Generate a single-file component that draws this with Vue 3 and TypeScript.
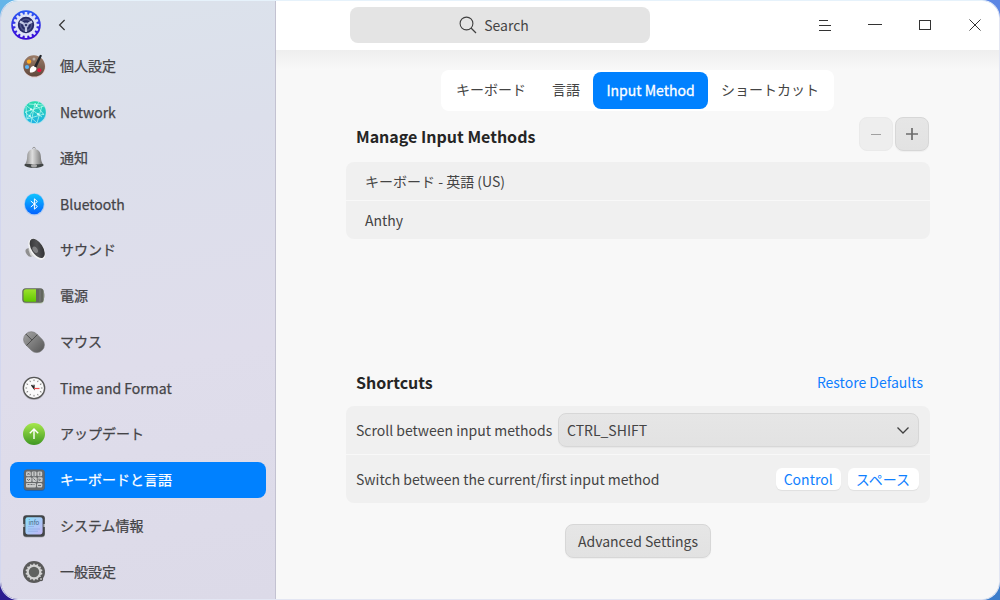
<script setup lang="ts">
import { ref } from 'vue'

interface NavItem {
  id: string
  label: string
}

const navItems: NavItem[] = [
  { id: 'personal', label: '個人設定' },
  { id: 'network', label: 'Network' },
  { id: 'notify', label: '通知' },
  { id: 'bluetooth', label: 'Bluetooth' },
  { id: 'sound', label: 'サウンド' },
  { id: 'power', label: '電源' },
  { id: 'mouse', label: 'マウス' },
  { id: 'time', label: 'Time and Format' },
  { id: 'update', label: 'アップデート' },
  { id: 'keyboard', label: 'キーボードと言語' },
  { id: 'info', label: 'システム情報' },
  { id: 'general', label: '一般設定' },
]
const tabs: string[] = ['キーボード', '言語', 'Input Method', 'ショートカット']
const inputMethods: string[] = ['キーボード - 英語 (US)', 'Anthy']
const shortcutKeys: string[] = ['Control', 'スペース']
const activeNav = ref('keyboard')
const activeTab = ref('Input Method')

const isLatin = (text: string): boolean => /^[\x20-\x7e]+$/.test(text)
const ring = (count: number): number[] => Array.from({ length: count }, (_, i) => (i * 360) / count)
</script>

<template>
  <div class="desktop">
    <div class="window">
      <aside class="sidebar">
        <div class="side-head">
          <svg class="logo" viewBox="0 0 30 30">
            <defs>
              <linearGradient id="lg" x1="0" y1="0" x2="0" y2="1">
                <stop offset="0" stop-color="#2a5cf5" />
                <stop offset="1" stop-color="#3d08d6" />
              </linearGradient>
            </defs>
            <circle cx="15" cy="15" r="14.8" fill="url(#lg)" />
            <g fill="#dfe3f7">
              <rect v-for="a in ring(16)" :key="a" x="13.7" y="2" width="2.6" height="4" rx=".6" :transform="`rotate(${a} 15 15)`" />
            </g>
            <circle cx="15" cy="15" r="9.5" fill="#262a66" stroke="#dfe3f7" stroke-width="2.6" />
            <circle cx="15" cy="15" r="5.6" fill="none" stroke="#4d5388" stroke-width="1.6" />
            <g stroke="#c3c8e4" stroke-width="2.2">
              <path v-for="a in [0, 120, 240]" :key="a" d="M15 16v6" :transform="`rotate(${a} 15 15)`" />
            </g>
            <circle cx="15" cy="15" r="2.6" fill="#a9afd3" />
            <circle cx="15" cy="15" r="1.1" fill="#20235c" />
          </svg>
          <svg class="back" viewBox="0 0 8 12"><path d="M6.6 1 1.6 6l5 5" fill="none" stroke="#333" stroke-width="1.2" /></svg>
        </div>
        <nav class="nav">
          <button v-for="item in navItems" :key="item.id" class="nav-item" :class="{ active: item.id === activeNav }" @click="activeNav = item.id">
            <svg class="icon" viewBox="0 0 24 24">
              <g v-if="item.id === 'personal'">
                <defs>
                  <linearGradient id="pal" x1="0" y1="0" x2="0" y2="1"><stop offset="0" stop-color="#9b7d69" /><stop offset="1" stop-color="#60483c" /></linearGradient>
                </defs>
                <ellipse cx="12.5" cy="13" rx="11" ry="10.6" fill="#e8a79a" opacity=".45" />
                <path d="M12 1.2C6 1 1.3 6 1.3 12S6 22.6 12.4 22.6c6 0 10.6-4.5 10.6-10.4C23 6 18 1.4 12 1.2z" fill="url(#pal)" />
                <circle cx="7" cy="7.6" r="2.2" fill="#ffab25" /><circle cx="12" cy="5" r="1.5" fill="#b8afa9" />
                <circle cx="5" cy="13" r="2.1" fill="#5bb5f8" /><circle cx="17.3" cy="16.2" r="2" fill="#e8123e" />
                <path d="M8 18.500c-.3-1.800-.4-4.300 1.500-5.800 1.700-1.300 4-.5 4.700.8.900 2.200-1.200 5.200-6.200 5z" fill="#fff" />
                <path d="m12 12.600 6-11.800 2 .8-5.500 12z" fill="#23262b" />
              </g>
              <g v-else-if="item.id === 'network'">
                <defs>
                  <linearGradient id="net" x1="0" y1="0" x2="0" y2="1"><stop offset="0" stop-color="#28dda9" /><stop offset="1" stop-color="#1eb1e6" /></linearGradient>
                </defs>
                <circle cx="12.900" cy="12.600" r="11.700" fill="#7fe6ee" opacity=".5" />
                <circle cx="12.900" cy="12.200" r="10.900" fill="url(#net)" />
                <g fill="none" stroke="#baf8ef" stroke-width=".75">
                  <path d="M4 5.500 20 17M3 12l19-6M5 19 17 2M9 23 13 3l9 12M3 12l12 11 5-17M4 7l1 12 17-5M7 4l14 1" />
                </g>
                <g fill="#e8fffb"><circle cx="9" cy="9.200" r="1" /><circle cx="16" cy="14" r="1" /><circle cx="14.500" cy="6" r=".9" /><circle cx="8" cy="16" r=".9" /></g>
              </g>
              <g v-else-if="item.id === 'notify'">
                <defs>
                  <linearGradient id="bell" x1="0" y1="0" x2="1" y2="0"><stop offset="0" stop-color="#858585" /><stop offset=".4" stop-color="#dedede" /><stop offset="1" stop-color="#6f6f6f" /></linearGradient>
                </defs>
                <circle cx="12" cy="2.600" r="1.300" fill="none" stroke="#999" stroke-width="1" />
                <ellipse cx="12" cy="19" rx="9.700" ry="2.900" fill="#424646" />
                <path d="M12 3c-4.500 0-6.600 2.900-6.800 7-.2 4-.6 5.500-1.700 7.500 4.500 1.200 12.500 1.200 17 0-1.100-2-1.500-3.500-1.700-7.500-.2-4.100-2.300-7-6.800-7z" fill="url(#bell)" />
                <ellipse cx="12" cy="19.700" rx="3" ry="1.800" fill="#a9a9a9" />
              </g>
              <g v-else-if="item.id === 'bluetooth'">
                <defs>
                  <linearGradient id="bt" x1="0" y1="0" x2="0" y2="1"><stop offset="0" stop-color="#0fc4ff" /><stop offset="1" stop-color="#0262ff" /></linearGradient>
                </defs>
                <ellipse cx="12.300" cy="12.400" rx="10.300" ry="11.200" fill="#65adff" opacity=".4" />
                <ellipse cx="12.300" cy="12" rx="9.500" ry="10.300" fill="url(#bt)" />
                <path d="M8.800 9l6.600 5.500-3 2.700V6.800l3 2.700L8.800 15" fill="none" stroke="#fff" stroke-width="1" />
              </g>
              <g v-else-if="item.id === 'sound'">
                <defs>
                  <linearGradient id="snd" x1="0" y1="0" x2="1" y2="1"><stop offset="0" stop-color="#2e2e30" /><stop offset=".5" stop-color="#505052" /><stop offset="1" stop-color="#252527" /></linearGradient>
                </defs>
                <ellipse cx="7.200" cy="14.500" rx="3" ry="4.500" transform="rotate(-35 7.200 14.500)" fill="#8f8f8f" />
                <path d="m6.500 12 2 5.500L21 22l1.500-2L9 3z" fill="#d4d4d4" />
                <ellipse cx="14.800" cy="11.200" rx="6.600" ry="12" transform="rotate(-33 14.800 11.200)" fill="#f2f2f2" />
                <ellipse cx="15.200" cy="10.400" rx="5.600" ry="10.800" transform="rotate(-33 15.200 10.400)" fill="url(#snd)" />
                <ellipse cx="13.200" cy="11.800" rx="2.300" ry="3.600" transform="rotate(-33 13.200 11.800)" fill="#808082" />
              </g>
              <g v-else-if="item.id === 'power'">
                <defs>
                  <linearGradient id="pow" x1="0" y1="0" x2="0" y2="1"><stop offset="0" stop-color="#9be22c" /><stop offset="1" stop-color="#61c800" /></linearGradient>
                </defs>
                <rect x=".3" y="4.800" width="21.700" height="15" rx="4" fill="#9fc47d" opacity=".45" />
                <rect x=".3" y="4.300" width="21.400" height="14.500" rx="3.500" fill="#63675e" />
                <path d="M22 8.800c1 .6 1 5 0 5.500z" fill="#aaa" />
                <path d="M4 5.300h10v12.500H4a2.500 2.500 0 0 1-2.500-2.500V7.800A2.500 2.500 0 0 1 4 5.300z" fill="url(#pow)" />
                <path d="M18 5.300v12.500" stroke="#7a7b7d" stroke-width="1" />
              </g>
              <g v-else-if="item.id === 'mouse'">
                <defs>
                  <linearGradient id="mou" x1="0" y1="0" x2="0" y2="1"><stop offset="0" stop-color="#9c9c9c" /><stop offset="1" stop-color="#5d5d5d" /></linearGradient>
                </defs>
                <g transform="rotate(-45 12 12)">
                  <rect x="4.200" y=".6" width="15.400" height="23" rx="7.600" fill="url(#mou)" stroke="#747474" stroke-width=".6" />
                  <path d="M4.200 9.200h15.400M11.900.8v8.400" stroke="#484848" stroke-width=".9" />
                </g>
              </g>
              <g v-else-if="item.id === 'time'">
                <circle cx="12" cy="12.500" r="11.500" fill="#888" opacity=".4" />
                <circle cx="12" cy="12" r="10.600" fill="#fafafa" stroke="#565656" stroke-width="1.300" />
                <path v-for="a in ring(12)" :key="a" d="M12 3.500v1.600" stroke="#777" stroke-width=".9" :transform="`rotate(${a} 12 12)`" />
                <path d="M9.500 9 12 12.500V8.800" fill="none" stroke="#222" stroke-width="1.300" />
                <path d="M12 12.500h5.500" stroke="#ef4b4b" stroke-width="1.200" />
              </g>
              <g v-else-if="item.id === 'update'">
                <defs>
                  <linearGradient id="upd" x1="0" y1="0" x2="0" y2="1"><stop offset="0" stop-color="#a6e84c" /><stop offset="1" stop-color="#3f9722" /></linearGradient>
                </defs>
                <circle cx="12" cy="12" r="11" fill="url(#upd)" />
                <path d="M12 17V7.300M7.800 11.300 12 7l4.200 4.300" fill="none" stroke="#fff" stroke-width="1.400" />
              </g>
              <g v-else-if="item.id === 'keyboard'">
                <rect x="1.700" y="1.800" width="21.200" height="21.200" rx="3.400" fill="#29568b" opacity=".7" />
                <rect x="2" y="1.600" width="20.600" height="20.400" rx="3" fill="#66696b" />
                <g fill="#c8caca">
                  <rect x="4" y="3.500" width="4.800" height="4.800" rx="1.300" /><rect x="9.700" y="3.500" width="4.800" height="4.800" rx="1.300" /><rect x="15.400" y="3.500" width="4.800" height="4.800" rx="1.300" />
                  <rect x="4" y="9.300" width="5.500" height="4.600" rx="1" /><rect x="10.400" y="9.300" width="4.400" height="4.600" rx="1" /><rect x="15.700" y="9.300" width="4.800" height="4.600" rx="1" />
                  <rect x="4" y="14.900" width="10" height="4.600" rx="1" /><rect x="14.900" y="14.900" width="5.400" height="4.600" rx="1.500" />
                </g>
                <path d="m5.500 4.800 2 2m0-2-2 2M12 4v4M17.800 4.500v3M5 11l1.500 1.500L8 11M11.500 10.500l2 2m3.500-2v2l2-1M5.500 16.500h2m1 0h2m1 0h1M16 17.500h3" stroke="#6b6e70" stroke-width="1" fill="none" />
              </g>
              <g v-else-if="item.id === 'info'">
                <defs>
                  <linearGradient id="inf" x1="0" y1="0" x2="1" y2="1"><stop offset="0" stop-color="#8be0fc" /><stop offset="1" stop-color="#c3b5f5" /></linearGradient>
                </defs>
                <rect x="1" y="1.800" width="22" height="21.800" rx="3.500" fill="#777" opacity=".45" />
                <rect x="1.200" y="1.200" width="21.600" height="21.500" rx="3" fill="#424548" />
                <path d="M1 10h1.500v3H1m22-3h-1.500v3H23" fill="#b9bcc1" />
                <rect x="3.400" y="3.200" width="17.200" height="17.200" rx="2.300" fill="url(#inf)" />
                <text x="6.400" y="10.500" font-size="6" font-family="Noto Sans CJK JP, sans-serif" fill="#426681">info</text>
                <path d="M6 12.500h6M6 15h12M6 17.300h10" stroke="#8fa9e4" stroke-width=".7" />
              </g>
              <g v-else>
                <circle cx="12" cy="12" r="11" fill="#5a5a5a" />
                <circle cx="12" cy="12" r="6.300" fill="#606260" stroke="#d3d3d3" stroke-width="2.200" />
                <g fill="#d3d3d3">
                  <rect v-for="a in ring(14)" :key="a" x="11.200" y="3.600" width="1.600" height="1.600" :transform="`rotate(${a} 12 12)`" />
                </g>
                <circle cx="19" cy="19" r="2.200" fill="#555" /><circle cx="19" cy="19" r="1" fill="#bbb" />
              </g>
            </svg>
            <span :class="{ cjk: !isLatin(item.label) }">{{ item.label }}</span>
          </button>
        </nav>
      </aside>

      <main class="main">
        <header class="titlebar">
          <div class="search">
            <svg width="18" height="18" viewBox="0 0 18 18"><circle cx="7.500" cy="7.500" r="6.400" fill="none" stroke="#404040" stroke-width="1.100" /><path d="m12 12 5 5" stroke="#404040" stroke-width="1.300" /></svg>
            <span>Search</span>
          </div>
          <div class="controls">
            <svg viewBox="0 0 50 50"><path d="M19 20.500h9M19 25.500h12M19 30.500h12" /></svg>
            <svg viewBox="0 0 50 50"><path d="M18 24.500h14" /></svg>
            <svg viewBox="0 0 50 50"><rect x="19.500" y="20.500" width="11" height="9" /></svg>
            <svg viewBox="0 0 50 50"><path d="m19.500 19.500 11 11m0-11-11 11" /></svg>
          </div>
        </header>

        <section class="content">
          <div class="tabs">
            <button v-for="tab in tabs" :key="tab" class="tab" :class="{ active: tab === activeTab, cjk: !isLatin(tab) }" @click="activeTab = tab">{{ tab }}</button>
          </div>

          <div class="section-head">
            <h2>Manage Input Methods</h2>
            <div class="tools">
              <button class="btn square disabled"><svg viewBox="0 0 14 14"><path d="M2 7.500h10" stroke="#a0a0a0" stroke-width="1" /></svg></button>
              <button class="btn square"><svg viewBox="0 0 14 14"><path d="M1 7h12M7 1v12" stroke="#6c6c6c" stroke-width="1.700" /></svg></button>
            </div>
          </div>
          <div class="group methods">
            <div v-for="m in inputMethods" :key="m" class="row method">{{ m }}</div>
          </div>

          <div class="section-head shortcuts-head">
            <h2>Shortcuts</h2>
            <a class="link">Restore Defaults</a>
          </div>
          <div class="group">
            <div class="row setting">
              <span>Scroll between input methods</span>
              <button class="btn select">
                <span>CTRL_SHIFT</span>
                <svg width="14" height="9" viewBox="0 0 14 9"><path d="m1.500 1.500 5.500 5.500 5.500-5.500" fill="none" stroke="#404040" stroke-width="1.300" /></svg>
              </button>
            </div>
            <div class="row setting">
              <span>Switch between the current/first input method</span>
              <div class="keys"><kbd v-for="k in shortcutKeys" :key="k">{{ k }}</kbd></div>
            </div>
          </div>
          <button class="btn advanced">Advanced Settings</button>
        </section>
      </main>
    </div>
  </div>
</template>

<style>
body { margin: 0; overflow: hidden; }
</style>

<style scoped>
* { box-sizing: border-box; }
button { font: inherit; color: inherit; border: 0; background: none; padding: 0; margin: 0; }
.desktop {
  width: 1000px; height: 600px;
  background:
    linear-gradient(#65b5e8, #65b5e8) 0 0 / 500px 300px no-repeat,
    linear-gradient(#5c86e4, #5c86e4) 100% 0 / 500px 300px no-repeat,
    linear-gradient(#2b1c90, #2b1c90) 0 100% / 500px 300px no-repeat,
    #3c7dcb;
  font: 14px/20px "Noto Sans CJK JP", sans-serif;
  color: #444;
}
.window { display: flex; width: 1000px; height: 600px; border-radius: 18px; overflow: hidden; border: 1px solid #e3e6f3; border-top-color: #e6f2fb; border-left-color: #d3d7ee; }
.sidebar { width: 275px; flex: none; border-right: 1px solid #c3c2d1; background: linear-gradient(170deg, #dce3ec 0%, #dcdfeb 25%, #dfddeb 60%, #dcdae8 100%); }
.side-head { height: 46px; padding: 1px 0 0 10px; display: flex; align-items: center; }
.logo { width: 30px; height: 30px; }
.back { width: 8px; height: 12px; margin-left: 17px; }
.nav { display: flex; flex-direction: column; gap: 10px; padding: 1px 9px 0; }
.nav-item { display: flex; align-items: center; height: 36px; padding-left: 12px; border-radius: 8px; color: #444447; -webkit-text-stroke: .25px currentColor; text-align: left; }
.nav-item.active { background: #0081ff; color: #fff; }
.nav-item .cjk { padding-bottom: 2px; }
.icon { width: 24px; height: 24px; margin-right: 14px; flex: none; -webkit-text-stroke: 0; }
.main { flex: 1; background: #f8f8f8; }
.titlebar { height: 49px; background: #fff; display: flex; align-items: center; justify-content: space-between; padding: 0 0 1px 74px; }
.search { width: 300px; height: 36px; border-radius: 8px; background: #e4e4e4; display: flex; align-items: center; justify-content: center; gap: 7px; padding-right: 12px; }
.controls { display: flex; margin-right: -1px; }
.controls svg { width: 50px; height: 50px; fill: none; stroke: #333; stroke-width: 1; }
.content { height: 549px; padding: 20px 69px 0 70px; background: linear-gradient(#eee, #f8f8f8 20px); display: flex; flex-direction: column; }
.tabs { margin-left: 95px; display: flex; width: 393px; height: 41px; padding: 2px 1px 2px 2px; background: #fff; border-radius: 8px; }
.tab { padding: 0 13px 2px; border-radius: 8px; white-space: nowrap; }
.tab.cjk { padding-bottom: 3px; }
.tab.active { background: #0081ff; color: #fff; width: 115px; -webkit-text-stroke: .3px currentColor; }
.section-head { display: flex; align-items: center; justify-content: space-between; height: 51px; padding-left: 10px; }
h2 { margin: 0; font-size: 16px; line-height: 24px; font-weight: 700; color: #252525; }
.tools { display: flex; gap: 2px; padding-right: 1px; margin-top: -5px; }
.section-head:not(.shortcuts-head) h2 { padding-bottom: 2px; }
.btn { background: linear-gradient(#e6e6e6, #e2e2e2); border: 1px solid #d7d7d7; border-radius: 8px; box-shadow: 0 1px 1px #0000000a; }
.square { width: 34px; height: 34px; display: grid; place-items: center; }
.square svg { width: 14px; height: 14px; }
.square.disabled { background: #eee; border-color: #eaeaea; box-shadow: none; }
.group { background: #f0f0f0; border-radius: 8px; }
.methods { height: 77px; }
.row + .row { border-top: 1px solid #f8f8f8; }
.method { height: 38px; padding: 9px 19px; }
.method + .method { height: 39px; }
.shortcuts-head { height: 48px; margin-top: 119px; padding-right: 7px; }
.link { color: #0f7fff; }
.setting { height: 48px; display: flex; align-items: center; justify-content: space-between; padding: 0 11px 0 10px; }
.setting + .setting { height: 49px; }
.select { width: 361px; height: 34px; display: flex; align-items: center; justify-content: space-between; padding: 0 8px; }
.keys { display: flex; gap: 7px; }
kbd { font: inherit; line-height: 22px; height: 22px; padding: 0 8px; border-radius: 6px; background: #fff; color: #0f7fff; box-shadow: 0 1px 1px #00000012; }
kbd:last-child { padding-right: 9px; }
.advanced { align-self: center; width: 146px; height: 34px; margin-top: 21px; }
</style>
